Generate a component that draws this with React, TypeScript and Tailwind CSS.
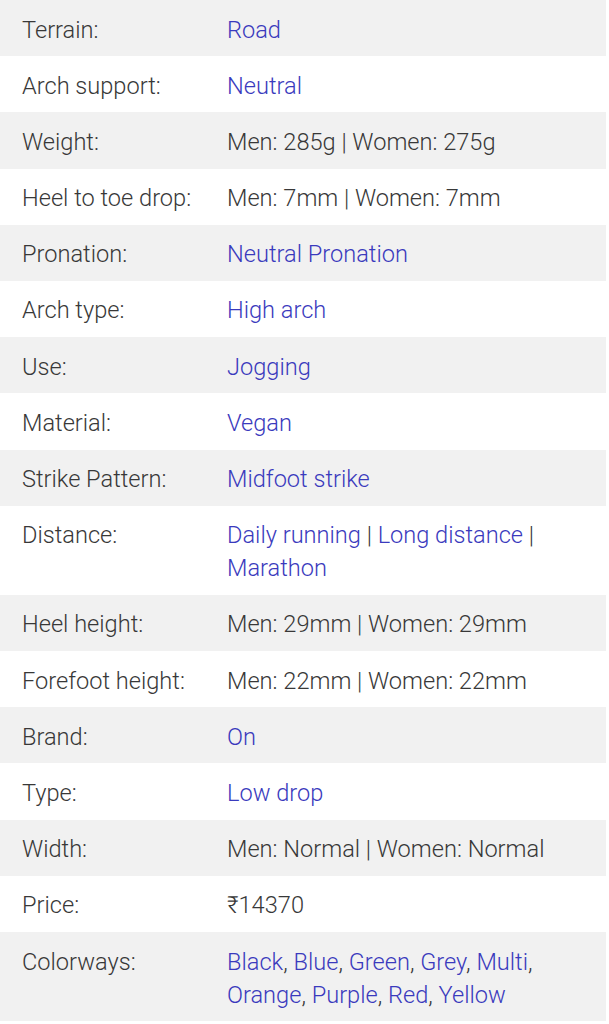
const specs: { label: string; value: string[]; link: boolean; sep?: string }[] = [
  { label: "Terrain:", value: ["Road"], link: true },
  { label: "Arch support:", value: ["Neutral"], link: true },
  { label: "Weight:", value: ["Men: 285g | Women: 275g"], link: false },
  { label: "Heel to toe drop:", value: ["Men: 7mm | Women: 7mm"], link: false },
  { label: "Pronation:", value: ["Neutral Pronation"], link: true },
  { label: "Arch type:", value: ["High arch"], link: true },
  { label: "Use:", value: ["Jogging"], link: true },
  { label: "Material:", value: ["Vegan"], link: true },
  { label: "Strike Pattern:", value: ["Midfoot strike"], link: true },
  { label: "Distance:", value: ["Daily running", "Long distance", "Marathon"], link: true, sep: " | " },
  { label: "Heel height:", value: ["Men: 29mm | Women: 29mm"], link: false },
  { label: "Forefoot height:", value: ["Men: 22mm | Women: 22mm"], link: false },
  { label: "Brand:", value: ["On"], link: true },
  { label: "Type:", value: ["Low drop"], link: true },
  { label: "Width:", value: ["Men: Normal | Women: Normal"], link: false },
  { label: "Price:", value: ["₹14370"], link: false },
  {
    label: "Colorways:",
    value: ["Black", "Blue", "Green", "Grey", "Multi", "Orange", "Purple", "Red", "Yellow"],
    link: true,
    sep: ", ",
  },
];

export default function App() {
  return (
    <div className="w-[606px] bg-white font-['Roboto',sans-serif] font-light text-[23.6px] leading-[33px] text-[#383838]">
      <table className="w-full border-collapse">
        <tbody>
          {specs.map((row, i) => (
            <tr key={row.label} className={i % 2 === 0 ? "bg-[#f1f1f1]" : "bg-white"}>
              <td className="w-[227px] pl-[22px] pt-[13.5px] pb-[9.7px] align-top">{row.label}</td>
              <td className="pr-4 pt-[13.5px] pb-[9.7px] align-top">
                {row.value.map((v, j) => (
                  <span key={v}>
                    {row.link ? <a className="text-[#3a3abd]">{v}</a> : v}
                    {j < row.value.length - 1 && row.sep}
                  </span>
                ))}
              </td>
            </tr>
          ))}
        </tbody>
      </table>
    </div>
  );
}
